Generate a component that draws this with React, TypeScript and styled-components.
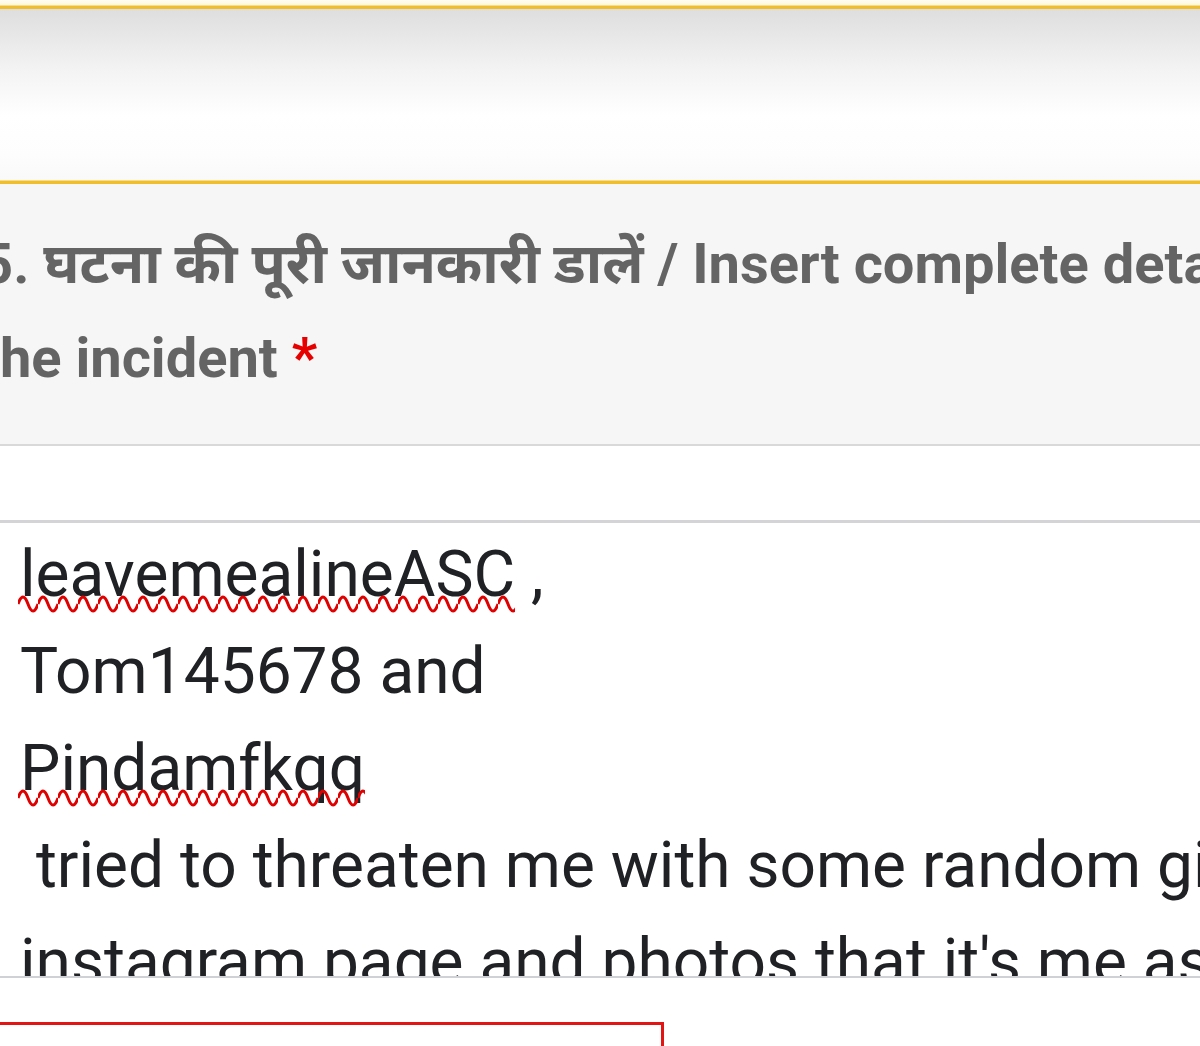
import React from "react";
import styled, { createGlobalStyle } from "styled-components";

const Global = createGlobalStyle`
  html, body { margin: 0; padding: 0; background: #ffffff; }
  body { width: 1200px; height: 1046px; overflow: hidden; font-family: Roboto, "Noto Sans", "Liberation Sans", sans-serif; }
`;

const Page = styled.div`
  width: 1200px;
  height: 1046px;
  overflow: hidden;
  display: flex;
  flex-direction: column;
  background: #ffffff;
  & > * { flex-shrink: 0; }
`;

const TopGap = styled.div`
  height: 6px;
  background: linear-gradient(#fffdf2, #fff7d8);
`;

const GoldRule = styled.div`
  height: 3px;
  background: #f0be2d;
  box-shadow: 0 -1px 0 #f8dc86, 0 1px 0 #f6d98a;
`;

const Banner = styled.div`
  height: 172px;
  background: linear-gradient(#dedede 0%, #f3f3f3 35%, #ffffff 62%, #fdfdfd 85%, #f9f9f9 100%);
`;

const QuestionPanel = styled.div`
  background: #f6f6f6;
  border-bottom: 2px solid #d9d9d9;
  padding: 33px 0 39px;
  height: 188px;
  box-sizing: content-box;
`;

const Heading = styled.div`
  margin-left: -19px;
  white-space: nowrap;
  font-family: Roboto, "Noto Sans", "Noto Sans Devanagari", "Lohit Devanagari", "Liberation Sans", sans-serif;
  font-weight: 700;
  font-size: 56px;
  line-height: 94px;
  color: #646464;
`;

const Required = styled.span`
  color: #e60000;
`;

const Spacer = styled.div`
  height: 74px;
  background: #ffffff;
`;

const TextBox = styled.div`
  border-top: 3px solid #d4d4d6;
  border-bottom: 2px solid #cfd1d6;
  height: 450px;
  overflow: hidden;
  padding: 3px 0 0 20px;
  font-family: Roboto, "Liberation Sans", sans-serif;
  font-size: 64px;
  line-height: 97px;
  color: #202124;
  white-space: nowrap;
`;

const Line = styled.div``;

const wave = encodeURIComponent(
  '<svg xmlns="http://www.w3.org/2000/svg" width="20" height="18" viewBox="0 0 20 18"><path d="M0 9 Q5 -5 10 9 T20 9" fill="none" stroke="#e00000" stroke-width="3"/></svg>'
);

const Misspelled = styled.span`
  position: relative;
  display: inline-block;
  line-height: 97px;
  &::after {
    content: "";
    position: absolute;
    left: -2px;
    right: 0;
    top: 69px;
    height: 18px;
    background-image: url("data:image/svg+xml,${wave}");
    background-repeat: repeat-x;
    background-size: 20px 18px;
  }
`;

const Bottom = styled.div`
  padding-top: 44px;
`;

const ErrorBox = styled.div`
  margin-left: -10px;
  width: 674px;
  height: 60px;
  border: 3px solid #e31414;
  box-sizing: border-box;
`;

export default function App() {
  return (
    <>
      <Global />
      <Page>
        <TopGap />
        <GoldRule />
        <Banner />
        <GoldRule />
        <QuestionPanel>
          <Heading>
            5. घटना की पूरी जानकारी डालें / Insert complete details of
            <br />
            the incident <Required>*</Required>
          </Heading>
        </QuestionPanel>
        <Spacer />
        <TextBox>
          <Line>
            <Misspelled>leavemealineASC</Misspelled> ,
          </Line>
          <Line>Tom145678 and</Line>
          <Line>
            <Misspelled>Pindamfkqq</Misspelled>
          </Line>
          <Line>&nbsp;tried to threaten me with some random girl</Line>
          <Line>instagram page and photos that it's me as</Line>
        </TextBox>
        <Bottom>
          <ErrorBox />
        </Bottom>
      </Page>
    </>
  );
}
